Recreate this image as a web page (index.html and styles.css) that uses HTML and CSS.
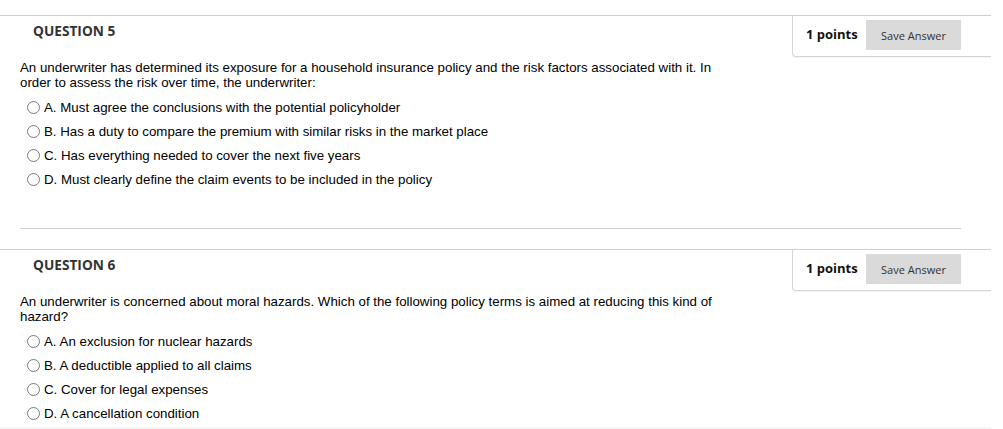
FILE: index.html
```html
<!DOCTYPE html>
<html>
<head>
<meta charset="utf-8">
<link rel="stylesheet" href="styles.css">
</head>
<body>
<div class="page">
  <section class="question">
    <div class="q-header">
      <h3 class="q-title">QUESTION 5</h3>
      <div class="points-box">
        <span class="points">1 points</span>
        <button class="save-btn" type="button">Save Answer</button>
      </div>
    </div>
    <div class="q-body">
      <p class="q-text">An underwriter has determined its exposure for a household insurance policy and the risk factors associated with it. In order to assess the risk over time, the underwriter:</p>
      <ul class="options">
        <li class="option"><span class="radio"></span><span>A. Must agree the conclusions with the potential policyholder</span></li>
        <li class="option"><span class="radio"></span><span>B. Has a duty to compare the premium with similar risks in the market place</span></li>
        <li class="option"><span class="radio"></span><span>C. Has everything needed to cover the next five years</span></li>
        <li class="option"><span class="radio"></span><span>D. Must clearly define the claim events to be included in the policy</span></li>
      </ul>
    </div>
    <hr class="divider">
  </section>
  <section class="question">
    <div class="q-header">
      <h3 class="q-title">QUESTION 6</h3>
      <div class="points-box">
        <span class="points">1 points</span>
        <button class="save-btn" type="button">Save Answer</button>
      </div>
    </div>
    <div class="q-body">
      <p class="q-text">An underwriter is concerned about moral hazards. Which of the following policy terms is aimed at reducing this kind of hazard?</p>
      <ul class="options">
        <li class="option"><span class="radio"></span><span>A. An exclusion for nuclear hazards</span></li>
        <li class="option"><span class="radio"></span><span>B. A deductible applied to all claims</span></li>
        <li class="option"><span class="radio"></span><span>C. Cover for legal expenses</span></li>
        <li class="option"><span class="radio"></span><span>D. A cancellation condition</span></li>
      </ul>
    </div>
  </section>
  <div class="bottom-strip"></div>
</div>
</body>
</html>
```
FILE: styles.css
```css
html, body {
  margin: 0;
  padding: 0;
  background: #ffffff;
}
.page {
  padding-top: 15px;
  width: 991px;
  font-family: "Liberation Sans", Arial, sans-serif;
  color: #000;
}
.question {
  border-top: 1px solid #cfcfcf;
}
.q-header {
  display: flex;
  justify-content: space-between;
  align-items: flex-start;
  height: 40px;
}
.q-title {
  margin: 0;
  padding: 6px 0 0 33px;
  font-family: "Open Sans", sans-serif;
  font-weight: 700;
  font-size: 13.7px;
  line-height: 18px;
  color: #333;
}
.points-box {
  display: flex;
  align-items: center;
  box-sizing: border-box;
  width: 199px;
  height: 41px;
  padding: 3px 30px 5px 13px;
  border-left: 1px solid #d4d4d4;
  border-bottom: 1px solid #d4d4d4;
  border-bottom-left-radius: 4px;
  box-shadow: 0 1px 1px rgba(0,0,0,0.04);
}
.points {
  font-family: "Open Sans", sans-serif;
  font-weight: 700;
  font-size: 13px;
  line-height: 16px;
  padding-bottom: 2px;
  color: #111;
  flex: 1;
}
.save-btn {
  width: 95px;
  height: 30px;
  border: none;
  border-radius: 0;
  background: #dadada;
  font-family: "Open Sans", sans-serif;
  font-size: 11px;
  color: #333;
  padding: 0;
}
.q-body {
  padding-left: 20px;
  padding-top: 4px;
}
.q-text {
  margin: 0;
  width: 720px;
  font-size: 13.3px;
  line-height: 15px;
}
.options {
  list-style: none;
  margin: 5px 0 0;
  padding: 0;
}
.option {
  display: flex;
  align-items: center;
  gap: 4px;
  height: 24px;
  padding-left: 7px;
  font-size: 13.3px;
}
.radio {
  box-sizing: border-box;
  width: 13px;
  height: 13px;
  border: 1px solid #7a7a7a;
  border-radius: 50%;
  flex: none;
}
.divider {
  margin: 37px 30px 20px 20px;
  border: none;
  border-top: 1px solid #cfcfcf;
  height: 0;
}
.bottom-strip {
  margin-top: 2px;
  height: 4px;
  background: #f6f6f6;
}
```
